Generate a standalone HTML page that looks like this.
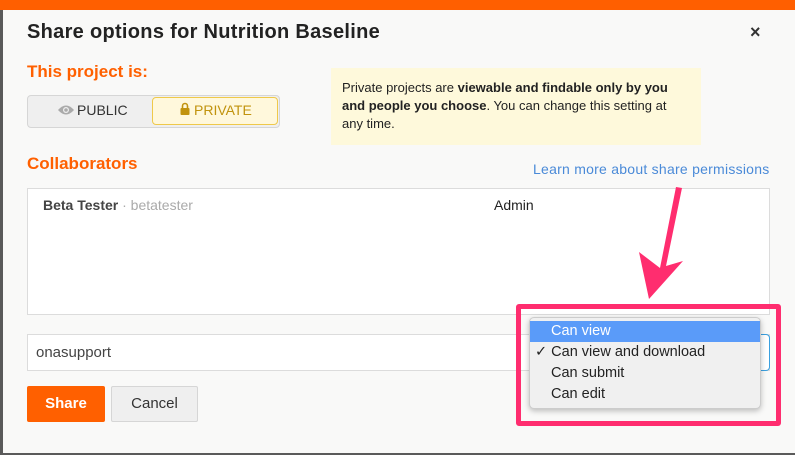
<!DOCTYPE html>
<html><head><style>
*{box-sizing:border-box;margin:0;padding:0}
body{width:795px;height:455px;overflow:hidden;background:#5a5a5a;font-family:"Liberation Sans",sans-serif;position:relative}
.m{position:absolute;left:3px;top:0;width:792px;height:453px;background:#f9f9f8}
.top{position:absolute;left:0;top:0;width:795px;height:10px;background:#ff5f00}
.a{position:absolute}
.h{color:#ff6000;font-weight:bold;font-size:17px}
</style></head><body>
<div class="m"></div>
<div class="top"></div>
<div class="a" style="left:27px;top:21px;font-size:20px;letter-spacing:0.3px;font-weight:bold;color:#222">Share options for Nutrition Baseline</div>
<div class="a" style="left:750px;top:22px;font-size:18px;font-weight:bold;color:#333">×</div>
<div class="a h" style="left:27px;top:62px">This project is:</div>
<div class="a" style="left:27px;top:95px;width:253px;height:33px;background:#efefef;border:1px solid #d6d6d6;border-radius:4px"></div>
<svg class="a" style="left:57px;top:104px" width="18" height="12" viewBox="0 0 18 12"><path d="M1 6 Q9 -3 17 6 Q9 15 1 6Z" fill="#aaa"/><circle cx="9" cy="6" r="3" fill="#efefef"/><circle cx="9" cy="6" r="1.8" fill="#aaa"/></svg>
<div class="a" style="left:77px;top:102px;font-size:14px;color:#333">PUBLIC</div>
<div class="a" style="left:152px;top:97px;width:126px;height:28px;background:#fff8dc;border:1px solid #efc94a;border-radius:4px"></div>
<svg class="a" style="left:180px;top:102px" width="10" height="13" viewBox="0 0 10 13"><path d="M2.5 6 V4 A2.5 2.5 0 0 1 7.5 4 V6" stroke="#c1930e" stroke-width="1.6" fill="none"/><rect x="0.5" y="6" width="9" height="7" rx="1" fill="#c1930e"/></svg>
<div class="a" style="left:194px;top:102px;font-size:14px;color:#c1930e">PRIVATE</div>
<div class="a" style="left:331px;top:68px;width:370px;height:77px;background:#fef9db;padding:11px 11px;font-size:13px;line-height:18px;color:#222">Private projects are <b>viewable and findable only by you and people you choose</b>. You can change this setting at any time.</div>
<div class="a h" style="left:27px;top:154px">Collaborators</div>
<div class="a" style="left:533px;top:161px;font-size:14px;letter-spacing:0.25px;color:#4a8ad8">Learn more about share permissions</div>
<div class="a" style="left:27px;top:188px;width:743px;height:127px;background:#fff;border:1px solid #dcdcdc"></div>
<div class="a" style="left:43px;top:197px;font-size:14px;color:#444"><b>Beta Tester</b> <span style="color:#aaa">· betatester</span></div>
<div class="a" style="left:494px;top:197px;font-size:14px;color:#222">Admin</div>
<div class="a" style="left:27px;top:334px;width:743px;height:37px;background:#fff;border:1px solid #dcdcdc"></div>
<div class="a" style="left:740px;top:334px;width:30px;height:37px;border:1px solid #3aa0e0;border-left:none;border-radius:0 4px 4px 0"></div>
<div class="a" style="left:36px;top:344px;font-size:15px;color:#444">onasupport</div>
<div class="a" style="left:27px;top:386px;width:78px;height:36px;background:#ff6000;border-radius:2px;color:#fff;font-weight:bold;font-size:15px;text-align:center;line-height:36px">Share</div>
<div class="a" style="left:111px;top:386px;width:87px;height:36px;background:#efefef;border:1px solid #d6d6d6;border-radius:2px;color:#333;font-size:15px;text-align:center;line-height:34px">Cancel</div>
<svg class="a" style="left:0;top:0" width="795" height="455">
<path d="M682 188 L676 187 L660 268 L639 252 L649 299 L683 261 L666 266 Z" fill="#ff2d6f"/>
</svg>
<div class="a" style="left:516px;top:304px;width:265px;height:122px;border:5px solid #ff2d6f;border-radius:3px"></div>
<div class="a" style="left:529px;top:317px;width:232px;height:92px;background:#f0f0f0;border:1px solid #ccc;border-radius:5px;box-shadow:0 2px 6px rgba(0,0,0,.25);font-size:14.5px;color:#222">
<div style="margin-top:3px;height:21px;background:#5a9bf9;color:#fff;padding-left:21px;line-height:21px">Can view</div>
<div style="height:21px;line-height:21px;padding-left:5px">✓ Can view and download</div>
<div style="height:21px;line-height:21px;padding-left:21px">Can submit</div>
<div style="height:21px;line-height:21px;padding-left:21px">Can edit</div>
</div>
</body></html>
